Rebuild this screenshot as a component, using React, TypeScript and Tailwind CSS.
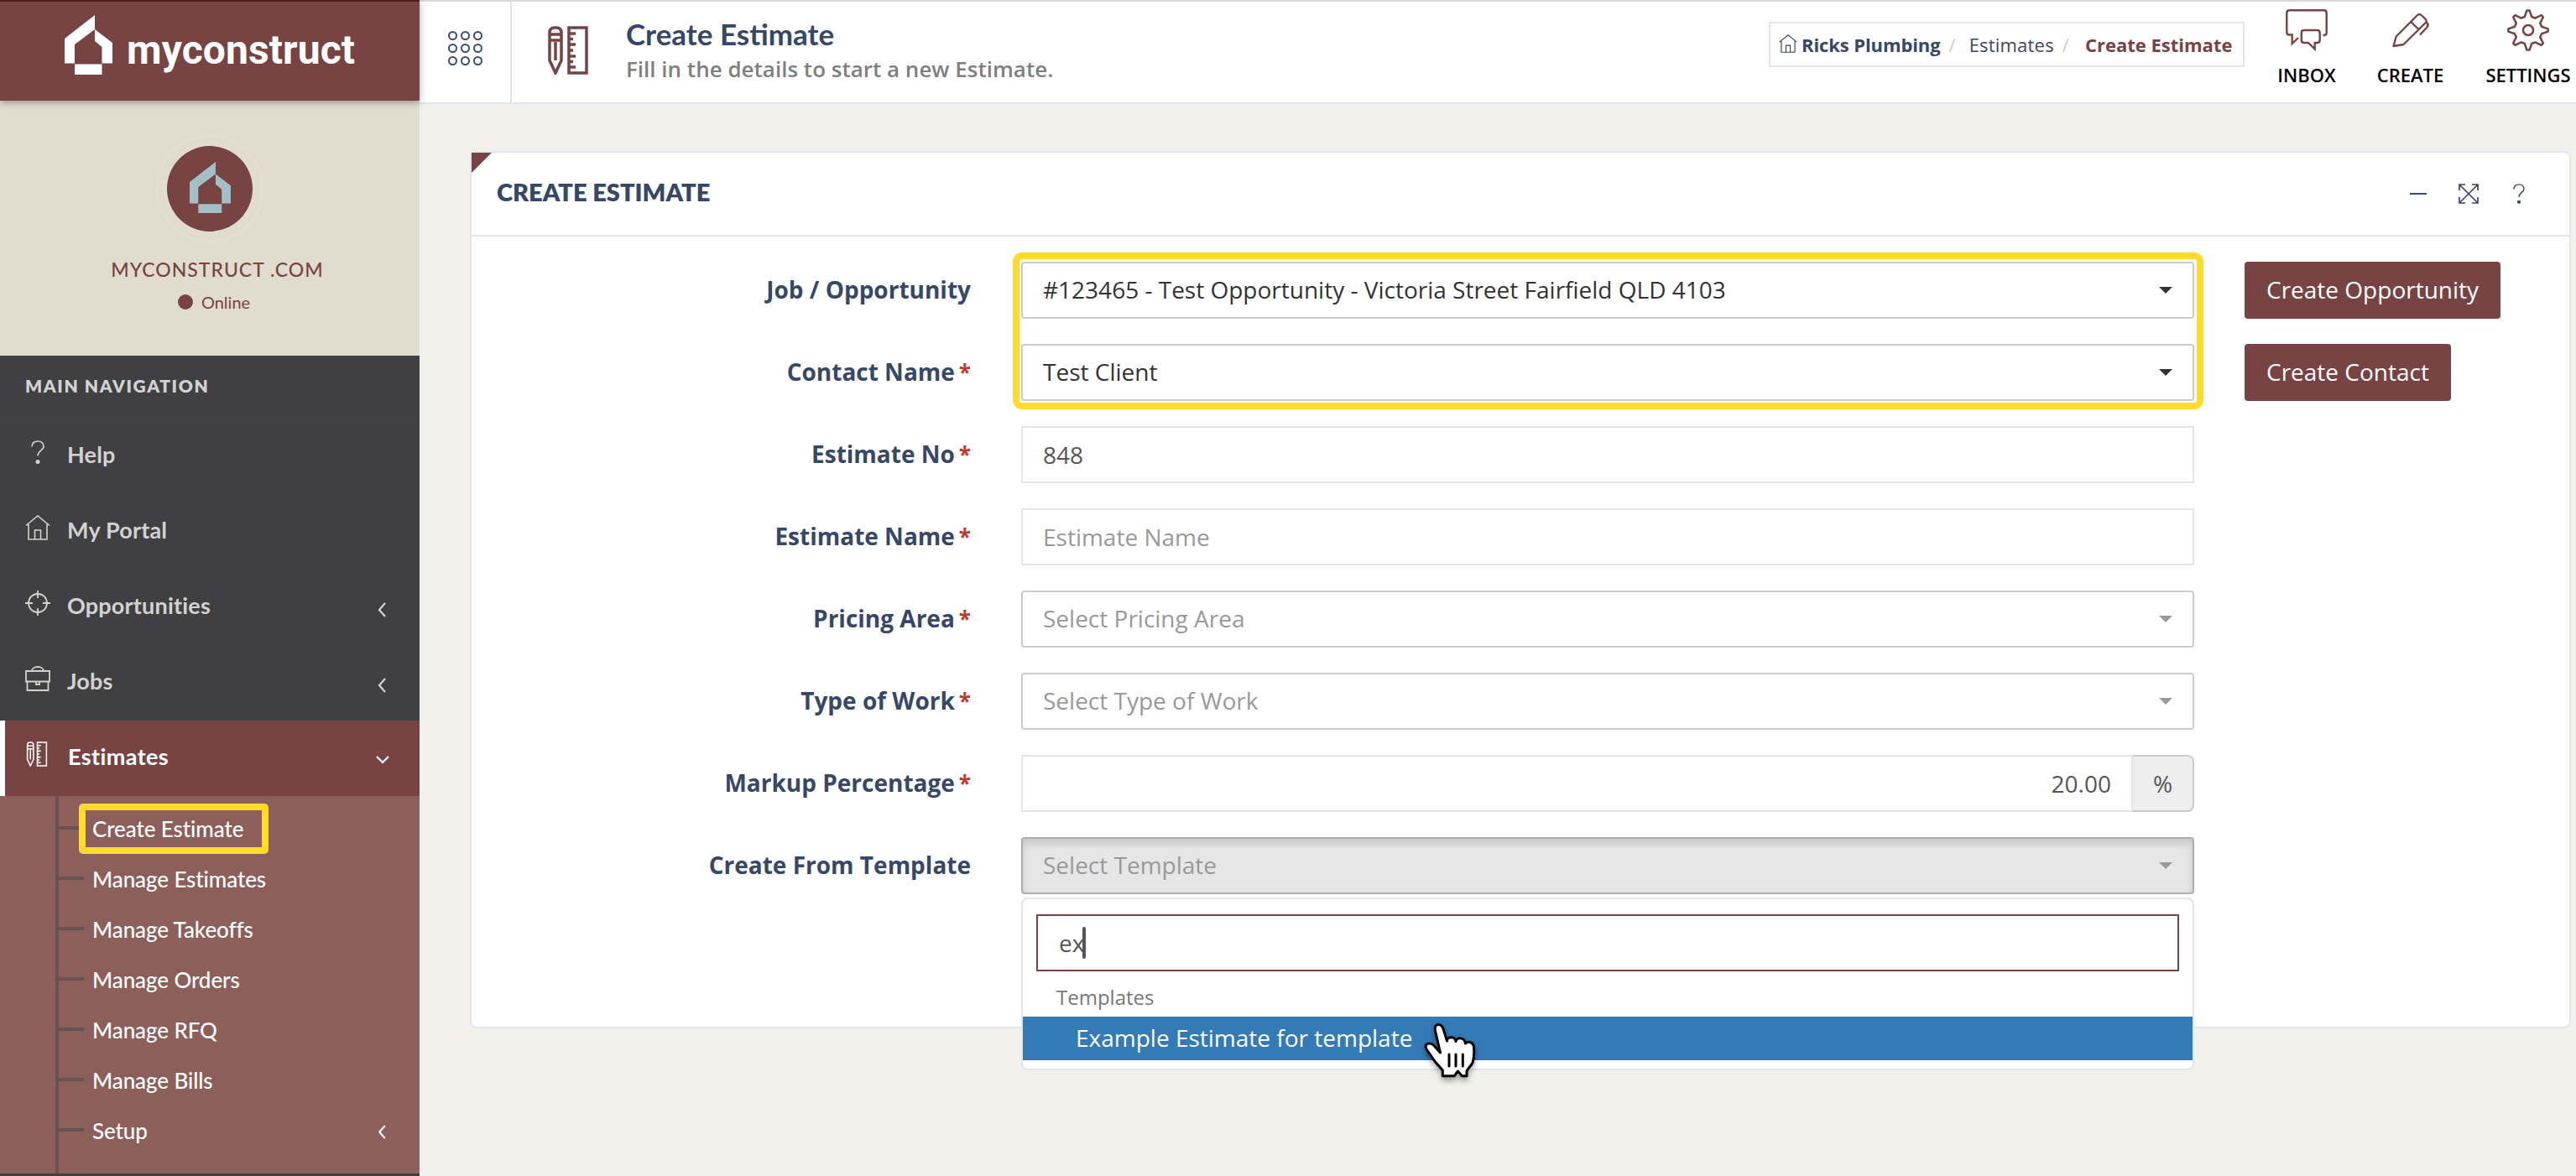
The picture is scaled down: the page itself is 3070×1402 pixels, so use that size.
import React from "react";

type P = { className?: string };

const House = ({ className }: P) => (
  <svg viewBox="0 0 57 71" className={className} fill="currentColor">
    <path d="M36 0V17L12 35V57.500H0V28Z" />
    <path d="M36 17L57 33V57.500H44.500V38L36 31Z" />
    <path d="M12 58.500H44.500V71H12Z" />
  </svg>
);

const PencilRuler = ({ className, sw }: P & { sw: number }) => (
  <svg viewBox="0 0 48 58" className={className} fill="none" stroke="currentColor" strokeWidth={sw}>
    <path d="M2 8Q2 2 8 2H10Q16 2 16 8V41L9 56L2 41Z M2 10H16 M2 17H16 M9 19V41" />
    <path d="M25 2H46V56H25Z M25 9H33 M25 15.500H30 M25 22H33 M25 29H30 M25 36H33 M25 42.500H30 M25 49H33" />
  </svg>
);

const Home = ({ className }: P) => (
  <svg viewBox="0 0 30 30" className={className} fill="none" stroke="currentColor" strokeWidth="1.6">
    <path d="M1 12.500L15 1L29 12.500 M4 11V29H26V11 M11.500 29V18H18.500V29" />
  </svg>
);

const Question = ({ className }: P) => (
  <svg viewBox="0 0 16 28" className={className} fill="none" stroke="currentColor" strokeWidth="1.7">
    <path d="M1 7.500C1 3.500 4 1 8 1C12 1 15 3.500 15 7.500C15 11.500 8 12.500 8 18.500" />
    <circle cx="8" cy="25.500" r="2.500" fill="currentColor" stroke="none" />
  </svg>
);

const Target = ({ className }: P) => (
  <svg viewBox="0 0 30 30" className={className} fill="none" stroke="currentColor" strokeWidth="1.8">
    <circle cx="15" cy="15" r="11" />
    <path d="M15 0V9 M15 21V30 M0 15H9 M21 15H30" />
  </svg>
);

const Briefcase = ({ className }: P) => (
  <svg viewBox="0 0 30 30" className={className} fill="none" stroke="currentColor" strokeWidth="1.8">
    <path d="M1 6H29V18.500H1Z M2.500 18.500V29H27.500V18.500 M8 6C8 3 11 1 15 1C19 1 22 3 22 6 M13 19V22H17V19" />
  </svg>
);

const ChevLeft = ({ className }: P) => (
  <svg viewBox="0 0 10 18" className={className} fill="none" stroke="currentColor" strokeWidth="2.2">
    <path d="M9 1L2 9L9 17" />
  </svg>
);

const ChevDown = ({ className }: P) => (
  <svg viewBox="0 0 16 10" className={className} fill="none" stroke="currentColor" strokeWidth="2.200">
    <path d="M1 1L8 8L15 1" />
  </svg>
);

const Caret = ({ className }: P) => (
  <svg viewBox="0 0 16 8" className={className} fill="currentColor">
    <path d="M0 0H16L8 8Z" />
  </svg>
);

const Inbox = ({ className }: P) => (
  <svg viewBox="0 0 50 50" className={className} fill="none" stroke="currentColor" strokeWidth="2.4" strokeLinejoin="miter">
    <path d="M44.500 31H45.500Q48.700 31 48.700 28V4.500Q48.700 1.300 45.500 1.300H4.500Q1.300 1.300 1.300 4.500V27.500Q1.300 30.500 4.500 30.500H7.700V41L15 34" />
    <path d="M22 25H37.500Q40.700 25 40.700 28V37Q40.700 40 37.500 40H34.700V47.500L27 40H22Q18.800 40 18.800 37V28Q18.800 25 22 25Z" />
  </svg>
);

const Pencil = ({ className }: P) => (
  <svg viewBox="0 0 44 42" className={className} fill="none" stroke="currentColor" strokeWidth="2.400" strokeLinejoin="round">
    <path d="M1.500 40L4.700 28.500L30 3Q32.300 .8 34.600 3L39.800 8Q41.500 10 39.800 12L13.500 38Z M22.700 11.500L31.500 20" />
    <path d="M40.500 11.500Q44 14.500 41.500 17.500L33 26.500" />
  </svg>
);

/* Eight flat-tipped teeth, 45 degrees apart, around (25, 25). */
const gearPath =
  "M" +
  Array.from({ length: 8 }, (_, i) => {
    const a = (i * Math.PI) / 4;
    const at = (x: number, y: number) =>
      `${(25 + x * Math.cos(a) - y * Math.sin(a)).toFixed(2)} ${(25 + x * Math.sin(a) + y * Math.cos(a)).toFixed(2)}`;
    return [at(-4.2, -16), at(-1.6, -23.6), at(1.6, -23.6), at(4.2, -16)].join("L");
  }).join("L") +
  "Z";

const Gear = ({ className }: P) => (
  <svg viewBox="0 0 50 50" className={className} fill="none" stroke="currentColor" strokeWidth="2.500" strokeLinejoin="round">
    <path d={gearPath} />
    <circle cx="25" cy="25" r="6" />
  </svg>
);

const Expand = ({ className }: P) => (
  <svg viewBox="0 0 24 24" className={className} fill="none" stroke="currentColor" strokeWidth="1.700">
    <path d="M1 1L23 23 M23 1L1 23 M1 8V1H8 M16 1H23V8 M23 16V23H16 M8 23H1V16" />
  </svg>
);

const Hand = ({ className }: P) => (
  <svg viewBox="0 0 62 68" className={className} fill="white" stroke="black" strokeWidth="3" strokeLinejoin="round">
    <path d="M22.300 63.700V57C18 52 13 47 10 42C8 38 2.500 33 2 29C2 25 7 24 11 26.500L19.500 36L13.500 10C12.500 5.500 14 2.500 17.300 2.500C20.500 2.500 22.500 5 23.500 9L27.500 22C27.500 16.500 37.500 16 38 22.500C39 17 48.500 17.500 49.500 25C52 22 58 23 59.300 28C60 34 59.500 43 58 48C56 52 52 55 51 58V63.700H45.500L40.300 58L36.300 63.700Z" />
    <path d="M30 38V52 M38 38V52 M46.300 38V52" fill="none" strokeLinecap="round" />
  </svg>
);

const nav = [
  { label: "Help", icon: <Question className="h-7 w-4" />, arrow: false },
  { label: "My Portal", icon: <Home className="size-[30px]" />, arrow: false },
  { label: "Opportunities", icon: <Target className="size-[30px]" />, arrow: true },
  { label: "Jobs", icon: <Briefcase className="size-[30px]" />, arrow: true },
];

const subs = ["Create Estimate", "Manage Estimates", "Manage Takeoffs", "Manage Orders", "Manage RFQ", "Manage Bills", "Setup"];

function Sidebar() {
  return (
    <aside className="flex h-[1402px] w-[500px] shrink-0 flex-col bg-[#404042] font-['Lato']">
      <div className="z-10 flex h-[120px] shrink-0 border-t-2 border-[#521c1c] bg-[#784443] pl-[77px] pt-4 text-white shadow-[0_2px_8px_rgba(0,0,0,0.35)]">
        <House className="h-[71px] w-[57px]" />
        <span className="ml-[17px] mt-[14px] font-['Roboto'] text-[48px] font-bold leading-[56px] tracking-[0.1px]">myconstruct</span>
      </div>
      <div className="flex h-[304px] shrink-0 flex-col items-center bg-[#e0dcce] pt-10 text-[#784443]">
        <div className="flex size-[130px] items-center justify-center rounded-full border-4 border-[#e2dfd3]">
          <div className="flex size-[102px] items-center justify-center rounded-full bg-[#784443] text-[#a3bfc7]">
            <House className="mb-1 h-[61px] w-[49px]" />
          </div>
        </div>
        <div className="ml-[18px] mt-[15px] whitespace-nowrap text-[23px] font-medium leading-8 tracking-[1px]">MYCONSTRUCT .COM</div>
        <div className="mt-2 flex items-center gap-[10px] pl-[10px] text-[20px] leading-[30px]">
          <span className="size-[18px] rounded-full bg-[#784443]" />
          Online
        </div>
      </div>
      <div className="h-[75px] shrink-0 border-b border-[#3d4447] pl-[30px] pt-5 text-[21px] font-extrabold leading-8 tracking-[1.600px] text-[#d2d2d2]">MAIN NAVIGATION</div>
      {nav.map((n) => (
        <div key={n.label} className="flex h-[90px] shrink-0 items-center pl-[30px] pr-[40px] text-[#d2d2d2]">
          <span className="mb-[11px] flex w-[30px] justify-center">{n.icon}</span>
          <span className="mb-[5px] ml-[20px] grow text-[27px] font-bold leading-9 tracking-[0.2px]">{n.label}</span>
          {n.arrow && <ChevLeft className="mt-[5px] h-[18px] w-[10px]" />}
        </div>
      ))}
      <div className="flex h-[90px] shrink-0 items-center border-l-[6px] border-white bg-[#784443] pl-[25px] pr-[36px] text-white">
        <PencilRuler sw={3} className="mb-[11px] h-[30px] w-[26px]" />
        <span className="mb-[5px] ml-[24px] grow text-[27px] font-bold leading-9 tracking-[0.4px]">Estimates</span>
        <ChevDown className="mt-1 h-[10px] w-4" />
      </div>
      <div className="flex h-[450px] shrink-0 bg-[#8d5f5a] pl-[66px]">
        <div className="w-1 bg-[#685251]" />
        <div className="grow pt-2">
          {subs.map((s, i) => (
            <div key={s} className="relative flex h-[60px] items-center pr-10 text-white">
              <span className="h-1 w-[30px] bg-[#685251]" />
              {i === 0 && <span className="absolute left-6 top-px h-[60px] w-[226px] rounded-[5px] border-8 border-[#ffdc2b]" />}
              <span className="ml-[10px] mt-[2px] grow whitespace-nowrap text-[26px] font-medium leading-8 tracking-[-0.1px]">{s}</span>
              {i === 6 && <ChevLeft className="mt-[5px] h-[17px] w-[10px]" />}
            </div>
          ))}
        </div>
      </div>
    </aside>
  );
}

function Header() {
  return (
    <header className="flex h-[124px] shrink-0 border-y-2 border-b-[#e1e5f0] border-t-[#d9d9d9] bg-white">
      <div className="flex w-[110px] items-center justify-center border-r-2 border-[#e1e1f0]">
        <div className="mb-[10px] grid grid-cols-3 gap-[4px]">
          {Array.from({ length: 9 }, (_, i) => (
            <span key={i} className="size-[11px] rounded-full border-2 border-[#3b4d74]" />
          ))}
        </div>
      </div>
      <PencilRuler sw={3.5} className="ml-[43px] mt-[29px] h-[58px] w-12 text-[#784443]" />
      <div className="ml-[45px] pt-[14px]">
        <div className="font-['Lato'] text-[35px] font-bold leading-[48px] tracking-normal text-[#374767]">Create Estimate</div>
        <div className="text-[26px] font-semibold leading-9 text-[#7f7f7f]">Fill in the details to start a new Estimate.</div>
      </div>
      <div className="ml-auto mt-6 flex h-[54px] w-[567px] items-center whitespace-nowrap border-2 border-[#e1e5f0] pl-[10px] text-[22px] text-[#374767]">
        <Home className="mb-[3px] size-[22px]" />
        <b className="ml-[5px] tracking-[-0.1px]">Ricks Plumbing</b>
        <span className="ml-[10px] text-[#ccc]">/</span>
        <span className="ml-[16px] tracking-[0.2px]">Estimates</span>
        <span className="ml-[10px] text-[#ccc]">/</span>
        <b className="ml-[19px] text-[#784443]">Create Estimate</b>
      </div>
      <div className="flex pt-[9px] text-[22px] font-semibold leading-[30px] text-black">
        <div className="ml-[38px] flex w-[72px] flex-col items-center">
          <Inbox className="h-[50px] w-[50px] text-[#784443]" />
          <span className="mt-[13px]">INBOX</span>
        </div>
        <div className="ml-[48px] flex w-[79px] flex-col items-center">
          <Pencil className="mb-1 mt-1 h-[42px] w-11 text-[#784443]" />
          <span className="mt-[13px]">CREATE</span>
        </div>
        <div className="ml-[50px] mr-[6px] flex w-[102px] flex-col items-center">
          <Gear className="size-[50px] text-[#784443]" />
          <span className="mt-[13px]">SETTINGS</span>
        </div>
      </div>
    </header>
  );
}

function Row({ label, req, children, button }: { label: string; req?: boolean; children: React.ReactNode; button?: string }) {
  return (
    <div className="flex h-[68px] items-center">
      <div className="w-[595px] whitespace-nowrap pb-[2px] text-right text-[28px] font-bold text-[#374767]">
        {label}
        {req && <span className="ml-[5px] text-[26px] font-bold leading-none text-[#c0392b]">*</span>}
      </div>
      <div className="relative ml-[60px] w-[1398px]">{children}</div>
      {button && (
        <button className="ml-[60px] h-[68px] whitespace-nowrap rounded bg-[#784443] px-[26px] pb-[2px] text-[28px] text-white">{button}</button>
      )}
    </div>
  );
}

const Select = ({ text, filled, open }: { text: string; filled?: boolean; open?: boolean }) => (
  <div
    className={
      "flex h-[68px] items-center justify-between rounded border-2 pb-[2px] pl-6 pr-6 text-[28px] " +
      (open ? "border-[#adadad] bg-[#e6e6e6] text-[#999] shadow-[inset_0_6px_10px_rgba(0,0,0,0.125)]" : filled ? "border-[#ccc] text-[#333]" : "border-[#ccc] text-[#999]")
    }
  >
    <span>{text}</span>
    <Caret className="mt-[2px] h-2 w-4" />
  </div>
);

function Menu() {
  return (
    <div className="absolute left-0 top-[72px] z-10 h-[206px] w-[1398px] rounded-lg border-2 border-[#e1e5f0] bg-white pt-[18px]">
      <div className="mx-4 flex h-[68px] items-center border-2 border-[#784443] pl-[25px] text-[28px] text-[#555]">
        <span>ex</span>
        <span className="-ml-[2px] h-[38px] w-1 rounded-sm bg-[#555]" />
      </div>
      <div className="h-[54px] pl-10 pt-[13px] text-2xl leading-9 text-[#777]">Templates</div>
      <div className="flex h-[52px] items-center bg-[#337ab7] pb-[2px] pl-[63px] text-[28px] text-white">Example Estimate for template</div>
      <Hand className="absolute left-[478px] top-[147px] h-[68px] w-[62px] drop-shadow-[0_4px_3px_rgba(0,0,0,0.35)]" />
    </div>
  );
}

export default function App() {
  return (
    <div className="flex h-[1402px] w-[3070px] overflow-hidden bg-[#f1f0eb] font-['Open_Sans',sans-serif]">
      <Sidebar />
      <div className="flex grow flex-col">
        <Header />
        <main className="ml-[60px] mt-14 h-[1046px] w-[2504px] rounded-lg border-2 border-[#e1e5f0] bg-white">
          <div className="relative flex h-[100px] items-center border-b-2 border-[#e5e5e5] pl-[30px] pr-[53px] text-[#374767]">
            <svg className="absolute left-0 top-0 size-6 text-[#784443]" viewBox="0 0 24 24" fill="currentColor">
              <path d="M0 0H24L0 24Z" />
            </svg>
            <h2 className="mb-[4px] grow font-['Lato'] text-[29px] font-extrabold">CREATE ESTIMATE</h2>
            <span className="h-[2px] w-5 bg-[#3b4d74]" />
            <Expand className="ml-[38px] size-6" />
            <Question className="ml-[41px] h-6 w-[14px]" />
          </div>
          <div className="relative flex flex-col gap-[30px] pt-[30px]">
            <div className="absolute left-[645px] top-[19px] h-[187px] w-[1419px] rounded-[11px] border-8 border-[#ffdc2b]" />
            <Row label="Job / Opportunity" button="Create Opportunity">
              <Select filled text="#123465 - Test Opportunity - Victoria Street Fairfield QLD 4103" />
            </Row>
            <Row label="Contact Name" req button="Create Contact">
              <Select filled text="Test Client" />
            </Row>
            <Row label="Estimate No" req>
              <div className="flex h-[68px] items-center border-2 border-[#e5e5e5] pl-6 text-[28px] text-[#555]">848</div>
            </Row>
            <Row label="Estimate Name" req>
              <div className="flex h-[68px] items-center border-2 border-[#e5e5e5] pl-6 text-[28px] text-[#999]">Estimate Name</div>
            </Row>
            <Row label="Pricing Area" req>
              <Select text="Select Pricing Area" />
            </Row>
            <Row label="Type of Work" req>
              <Select text="Select Type of Work" />
            </Row>
            <Row label="Markup Percentage" req>
              <div className="flex h-[68px] text-[28px] text-[#555]">
                <div className="flex grow items-center justify-end border-2 border-[#e5e5e5] pr-6">20.00</div>
                <div className="flex w-[73px] items-center justify-center rounded-r-lg border-2 border-l-0 border-[#ccc] bg-[#eee] text-[28px]">%</div>
              </div>
            </Row>
            <Row label="Create From Template">
              <Select open text="Select Template" />
              <Menu />
            </Row>
          </div>
        </main>
      </div>
    </div>
  );
}
